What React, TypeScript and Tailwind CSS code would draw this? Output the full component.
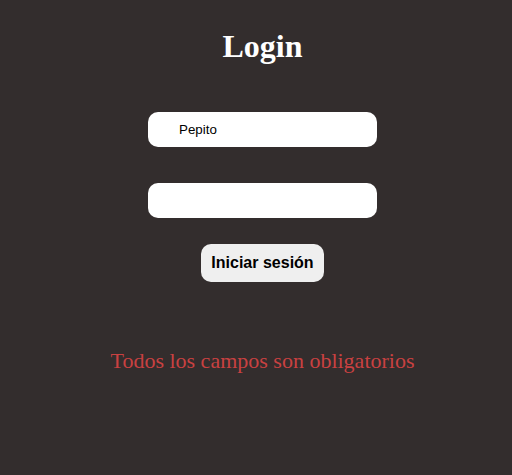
export default function App() {
  return (
    <div className="min-h-[475px] w-full bg-[#332d2d] font-['Liberation_Sans',Arial,sans-serif]">
      <div className="flex flex-col items-center pl-[13px]">
        <h1 className="mt-[28px] font-['Liberation_Serif','Times_New_Roman',serif] text-[32px] font-bold leading-[36px] text-white">
          Login
        </h1>

        <form className="mt-[48px] flex flex-col items-center" onSubmit={(e) => e.preventDefault()}>
          <input
            type="text"
            defaultValue="Pepito"
            className="h-[35px] w-[229px] rounded-[10px] bg-white pl-[31px] text-[13.33px] text-black outline-none"
          />
          <input
            type="password"
            className="mt-[36px] h-[35px] w-[229px] rounded-[10px] bg-white pl-[31px] text-[13.33px] text-black outline-none"
          />
          <button
            type="submit"
            className="mt-[26px] h-[38px] rounded-[10px] bg-[#efefef] px-[10px] text-[16px] font-bold text-black"
          >
            Iniciar sesión
          </button>
        </form>

        <p className="mt-[66px] font-['Liberation_Serif','Times_New_Roman',serif] text-[22px] leading-[26px] text-[#c94141]">
          Todos los campos son obligatorios
        </p>
      </div>
    </div>
  );
}
